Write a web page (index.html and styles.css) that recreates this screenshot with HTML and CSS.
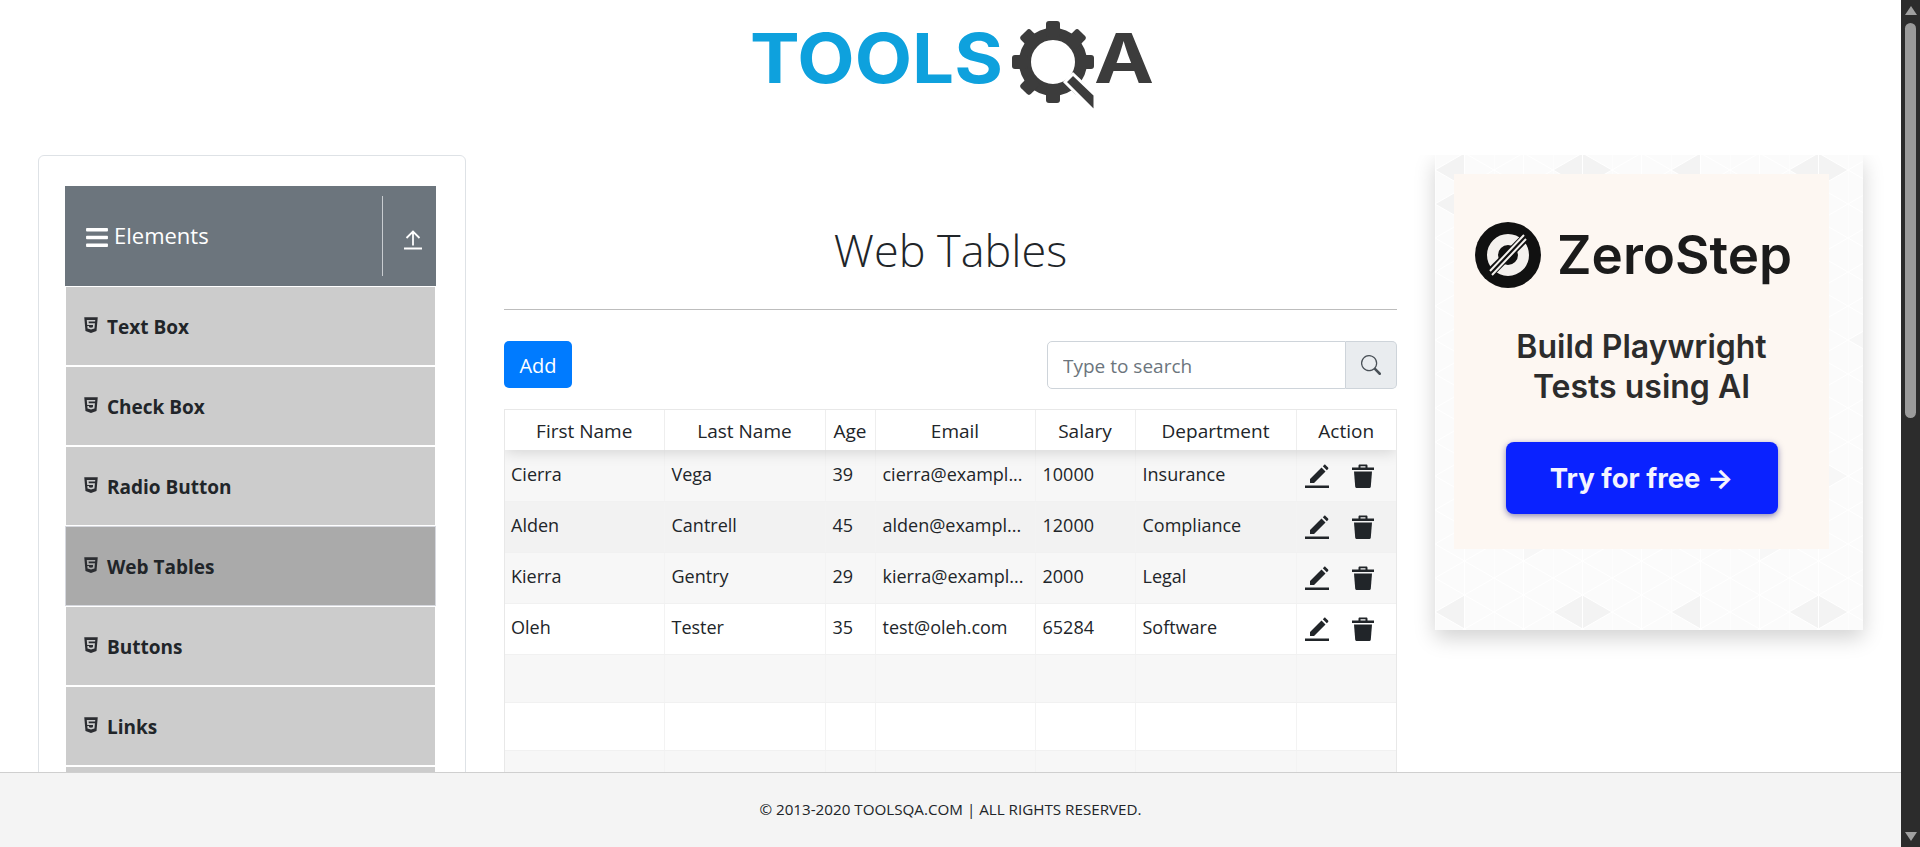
FILE: index.html
```html
<!DOCTYPE html>
<html lang="en">
<head>
    <meta charset="UTF-8">
    <meta name="viewport" content="width=device-width, initial-scale=1.0">
    <title>Web Tables</title>
    <link rel="stylesheet" href="styles.css">
</head>
<body>
    <!-- shared icons -->
    <svg class="sprite">
        <symbol id="i-html5" viewBox="0 0 384 512"><path d="M0 32l34.9 395.8L191.5 480l157.6-52.2L384 32H0zm308.2 127.9H124.4l4.1 49.4h175.6l-13.6 148.4-97.9 27v.3h-1.1l-98.7-27.3-6-75.8h47.7L138 320l53.5 14.5 53.7-14.5 6-62.2H84.3L71.5 112.2h241.1l-4.4 47.7z"/></symbol>
        <symbol id="i-edit" viewBox="0 0 24 24"><path d="M16.5 3.5 20.5 7.500 9 19H5v-4L16.5 3.500zM17.8 2.200l1.300-1.300c.4-.4 1-.4 1.400 0l2.600 2.600c.4.400.4 1 0 1.400l-1.300 1.300-4-4zM0 21.500h24V24H0z"/></symbol>
        <symbol id="i-trash" viewBox="0 0 24 24"><path fill-rule="evenodd" d="M7.500 3.500V1.700C7.500 1 8 .5 8.700 .5h6.600c.7 0 1.200.5 1.200 1.200v1.800H23V6H1V3.500h6.500zm2 0h5V2.300h-5v1.200z"/><path d="M3 7.500h18l-1.200 15c-.1 1-.9 1.500-1.900 1.500H6.100c-1 0-1.800-.5-1.900-1.500L3 7.500z"/></symbol>
    </svg>

    <div class="page">
        <header class="top">
            <svg class="logo" viewBox="0 0 420 110" aria-label="TOOLSQA">
                <text class="logo-blue" x="-2" y="83" textLength="253" lengthAdjust="spacingAndGlyphs">TOOLS</text>
                <g class="logo-gear">
                    <circle class="gear-ring" cx="301" cy="62" r="28"/>
                    <rect x="294" y="21" width="14" height="16" rx="3"/>
                    <rect x="294" y="21" width="14" height="16" rx="3" transform="rotate(45 301 62)"/>
                    <rect x="294" y="21" width="14" height="16" rx="3" transform="rotate(90 301 62)"/>
                    <rect x="294" y="21" width="14" height="16" rx="3" transform="rotate(135 301 62)"/>
                    <rect x="294" y="21" width="14" height="16" rx="3" transform="rotate(180 301 62)"/>
                    <rect x="294" y="21" width="14" height="16" rx="3" transform="rotate(225 301 62)"/>
                    <rect x="294" y="21" width="14" height="16" rx="3" transform="rotate(270 301 62)"/>
                    <rect x="294" y="21" width="14" height="16" rx="3" transform="rotate(315 301 62)"/>
                    <polygon class="gear-handle" points="321,74 343,95 343,112 313,82"/>
                </g>
                <text class="logo-dark" x="342" y="83" textLength="60" lengthAdjust="spacingAndGlyphs">A</text>
            </svg>
        </header>

        <main class="layout">
            <aside class="sidebar">
                <div class="group-head">
                    <div class="group-title">
                        <svg class="bars" viewBox="0 0 448 512"><path d="M16 132h416c8.837 0 16-7.163 16-16V76c0-8.837-7.163-16-16-16H16C7.163 60 0 67.163 0 76v40c0 8.837 7.163 16 16 16zm0 160h416c8.837 0 16-7.163 16-16v-40c0-8.837-7.163-16-16-16H16c-8.837 0-16 7.163-16 16v40c0 8.837 7.163 16 16 16zm0 160h416c8.837 0 16-7.163 16-16v-40c0-8.837-7.163-16-16-16H16c-8.837 0-16 7.163-16 16v40c0 8.837 7.163 16 16 16z"/></svg>
                        <span>Elements</span>
                    </div>
                    <div class="group-toggle">
                        <svg class="arrow" viewBox="0 0 18 20"><path d="M0 18.500h18M9 15.500V2M2.500 8 9 1.500 15.500 8"/></svg>
                    </div>
                </div>
                <ul class="menu">
                    <li class="menu-item"><svg class="html5"><use href="#i-html5"/></svg><span>Text Box</span></li>
                    <li class="menu-item"><svg class="html5"><use href="#i-html5"/></svg><span>Check Box</span></li>
                    <li class="menu-item"><svg class="html5"><use href="#i-html5"/></svg><span>Radio Button</span></li>
                    <li class="menu-item active"><svg class="html5"><use href="#i-html5"/></svg><span>Web Tables</span></li>
                    <li class="menu-item"><svg class="html5"><use href="#i-html5"/></svg><span>Buttons</span></li>
                    <li class="menu-item"><svg class="html5"><use href="#i-html5"/></svg><span>Links</span></li>
                    <li class="menu-item"></li>
                </ul>
            </aside>

            <section class="content">
                <h1 class="title">Web Tables</h1>
                <div class="toolbar">
                    <button class="add-btn" type="button">Add</button>
                    <div class="search">
                        <input class="search-input" type="text" placeholder="Type to search">
                        <span class="search-addon">
                            <svg class="search-icon" viewBox="0 0 16 16"><path d="M11.742 10.344a6.5 6.5 0 1 0-1.397 1.398h-.001c.03.04.062.078.098.115l3.85 3.85a1 1 0 0 0 1.415-1.414l-3.85-3.85a1.007 1.007 0 0 0-.115-.1zM12 6.5a5.5 5.5 0 1 1-11 0 5.5 5.5 0 0 1 11 0z"/></svg>
                        </span>
                    </div>
                </div>
                <div class="grid-wrap">
                    <table class="grid">
                        <colgroup>
                            <col class="c-first"><col class="c-last"><col class="c-age"><col class="c-email"><col class="c-salary"><col class="c-dept"><col class="c-action">
                        </colgroup>
                        <thead>
                            <tr><th>First Name</th><th>Last Name</th><th>Age</th><th>Email</th><th>Salary</th><th>Department</th><th>Action</th></tr>
                        </thead>
                        <tbody>
                            <tr class="odd">
                                <td>Cierra</td><td>Vega</td><td>39</td><td>cierra@exampl...</td><td>10000</td><td>Insurance</td>
                                <td><div class="actions"><svg class="act"><use href="#i-edit"/></svg><svg class="act"><use href="#i-trash"/></svg></div></td>
                            </tr>
                            <tr class="hover">
                                <td>Alden</td><td>Cantrell</td><td>45</td><td>alden@exampl...</td><td>12000</td><td>Compliance</td>
                                <td><div class="actions"><svg class="act"><use href="#i-edit"/></svg><svg class="act"><use href="#i-trash"/></svg></div></td>
                            </tr>
                            <tr class="odd">
                                <td>Kierra</td><td>Gentry</td><td>29</td><td>kierra@exampl...</td><td>2000</td><td>Legal</td>
                                <td><div class="actions"><svg class="act"><use href="#i-edit"/></svg><svg class="act"><use href="#i-trash"/></svg></div></td>
                            </tr>
                            <tr>
                                <td>Oleh</td><td>Tester</td><td>35</td><td>test@oleh.com</td><td>65284</td><td>Software</td>
                                <td><div class="actions"><svg class="act"><use href="#i-edit"/></svg><svg class="act"><use href="#i-trash"/></svg></div></td>
                            </tr>
                            <tr class="odd empty"><td></td><td></td><td></td><td></td><td></td><td></td><td></td></tr>
                            <tr class="empty"><td></td><td></td><td></td><td></td><td></td><td></td><td></td></tr>
                            <tr class="odd empty"><td></td><td></td><td></td><td></td><td></td><td></td><td></td></tr>
                        </tbody>
                    </table>
                </div>
            </section>

            <aside class="ad">
                <div class="ad-card">
                    <div class="ad-brand">
                        <svg class="ad-mark" viewBox="0 0 66 66">
                            <circle cx="33" cy="33" r="33" fill="#111"/>
                            <circle cx="33" cy="33" r="15.500" fill="none" stroke="#f4f1ee" stroke-width="11"/>
                            <path d="M13 53 53 13" stroke="#111" stroke-width="9"/>
                            <path d="M15 49 49 13M17 53 51 17" stroke="#f4f1ee" stroke-width="2"/>
                        </svg>
                        <span class="ad-name">ZeroStep</span>
                    </div>
                    <p class="ad-text">Build Playwright<br>Tests using AI</p>
                    <div class="ad-btn">Try for free →</div>
                </div>
            </aside>
        </main>

        <footer class="foot">© 2013-2020 TOOLSQA.COM | ALL RIGHTS RESERVED.</footer>
    </div>

    <div class="scrollbar">
        <span class="sb-up"></span>
        <div class="sb-track"><div class="sb-thumb"></div></div>
        <span class="sb-down"></span>
    </div>
</body>
</html>
```

FILE: styles.css
```css
* {
    box-sizing: border-box;
}
body {
    margin: 0;
    height: 100vh;
    overflow: hidden;
    display: flex;
    font-family: 'Open Sans', 'Noto Sans', sans-serif;
    color: #212529;
    background: #fff;
}
.sprite {
    display: none;
}
.page {
    flex: 1;
    min-width: 0;
    display: flex;
    flex-direction: column;
}

/* header */
.top {
    height: 155px;
    flex: none;
    padding-left: 752px;
}
.logo {
    display: block;
    width: 420px;
    height: 110px;
    overflow: visible;
}
.logo-blue, .logo-dark {
    font-family: Inter, sans-serif;
    font-weight: 700;
    font-size: 69px;
}
.logo-blue {
    fill: #0ea1dd;
}
.logo-dark {
    fill: #3c3c3c;
}
.logo-gear {
    fill: #3c3c3c;
}
.gear-ring {
    fill: none;
    stroke: #3c3c3c;
    stroke-width: 12;
}
.gear-handle {
    stroke: #fff;
    stroke-width: 3;
}

/* layout */
.layout {
    flex: 1;
    min-height: 0;
    overflow: hidden;
    display: grid;
    grid-template-columns: 428px 893px 428px;
    column-gap: 38px;
    padding-left: 38px;
    align-items: start;
}

/* sidebar */
.sidebar {
    height: 800px;
    padding: 30px 29px 30px 26px;
    border: 1px solid #dee2e6;
    border-radius: 6px;
}
.group-head {
    height: 100px;
    display: flex;
    align-items: center;
    background: #6c757d;
    color: #fff;
    font-size: 22px;
}
.group-title {
    flex: 1;
    display: flex;
    align-items: center;
    gap: 6px;
    padding-left: 21px;
    padding-bottom: 2px;
}
.bars {
    width: 22px;
    height: 25px;
    fill: #fff;
    margin-top: 5px;
}
.group-toggle {
    width: 54px;
    height: 80px;
    display: flex;
    align-items: center;
    justify-content: center;
    padding-left: 7px;
    border-left: 1px solid #c8ccd0;
}
.arrow {
    width: 18px;
    height: 20px;
    margin-top: 8px;
    fill: none;
    stroke: #fff;
    stroke-width: 1.8;
}
.menu {
    list-style: none;
    margin: 0;
    padding: 1px 1px 0;
}
.menu-item {
    height: 78px;
    margin-bottom: 2px;
    display: flex;
    align-items: center;
    gap: 9px;
    padding: 2px 0 0 18px;
    background: #ccc;
    font-size: 19px;
    font-weight: 700;
}
.menu-item.active {
    background: #aaa;
    outline: 1px solid #d6d8de;
}
.html5 {
    width: 14px;
    height: 18px;
    fill: #2b2d31;
    margin-bottom: 5px;
}

/* content */
.title {
    margin: 0;
    padding-top: 62px;
    height: 155px;
    border-bottom: 1px solid #bdbdbd;
    text-align: center;
    font-size: 45px;
    font-weight: 300;
    line-height: 66px;
}
.toolbar {
    display: flex;
    justify-content: space-between;
    margin-top: 31px;
}
.add-btn {
    width: 68px;
    height: 47px;
    padding: 2px 0 0;
    border: none;
    border-radius: 5px;
    background: #007bff;
    color: #fff;
    font: 400 20px 'Open Sans', sans-serif;
}
.search {
    width: 350px;
    height: 48px;
    display: flex;
}
.search-input {
    flex: 1;
    min-width: 0;
    padding: 2px 15px 0;
    border: 1px solid #ced4da;
    border-radius: 5px 0 0 5px;
    font: 400 19px 'Open Sans', sans-serif;
    color: #495057;
}
.search-input::placeholder {
    color: #6c757d;
    opacity: 1;
}
.search-addon {
    width: 51px;
    display: flex;
    align-items: center;
    justify-content: center;
    background: #e9ecef;
    border: 1px solid #ced4da;
    border-left: none;
    border-radius: 0 5px 5px 0;
}
.search-icon {
    width: 20px;
    height: 20px;
    fill: #495057;
}

/* table */
.grid-wrap {
    margin-top: 20px;
    border: 1px solid #e8e8e8;
    border-bottom: none;
    overflow: hidden;
}
.grid {
    width: 891px;
    table-layout: fixed;
    border-collapse: collapse;
    font-size: 18px;
}
.c-first { width: 159px; }
.c-last { width: 161px; }
.c-age { width: 50px; }
.c-email { width: 160px; }
.c-salary { width: 100px; }
.c-dept { width: 161px; }
.c-action { width: 100px; }
thead tr {
    height: 40px;
    box-shadow: 0 2px 15px rgba(0, 0, 0, 0.15);
    position: relative;
}
th {
    padding: 2px 3px 0;
    font-size: 19px;
    font-weight: 400;
    text-align: center;
    border-right: 1px solid #eee;
    white-space: nowrap;
}
th:last-child, td:last-child {
    border-right: none;
}
tbody tr {
    height: 51px;
}
tbody tr.empty {
    height: 48px;
}
td {
    padding: 0 0 3px 7px;
    border-right: 1px solid #f3f3f3;
    border-bottom: 1px solid #f1f1f1;
    white-space: nowrap;
}
td:first-child {
    padding-left: 6px;
}
tr.odd {
    background: #f7f7f7;
}
tr.hover {
    background: #f2f2f2;
}
.actions {
    display: flex;
    gap: 22px;
    padding-left: 1px;
    padding-top: 4px;
}
.act {
    width: 24px;
    height: 24px;
    fill: #212529;
}

/* ad */
.ad {
    width: 428px;
    height: 475px;
    padding: 19px 34px 81px 19px;
    box-shadow: 0 8px 20px rgba(0, 0, 0, 0.18);
    background-color: #fbfbfb;
    background-position: 0 -2px;
    background-image: url("data:image/svg+xml,%3Csvg xmlns='http://www.w3.org/2000/svg' width='236' height='442'%3E%3Cdefs%3E%3Cpattern id='g' width='59' height='34' patternUnits='userSpaceOnUse'%3E%3Cpath d='M29.5 0V34M0 17 29.5 0M0 17 29.5 34M29.5 0 59 17M29.5 34 59 17M0 0V34' stroke='%23fff' fill='none'/%3E%3C/pattern%3E%3C/defs%3E%3Cpath d='M0 17 29.5 0V34zM118 17 147.500 0V34zM147.500 0 177 17 147.500 34zM0 51 29.5 34V68z' fill='%23f3f3f3'/%3E%3Cpath d='M59 119 88.500 102V136zM177 187 206.500 170V204zM29.5 238 59 255 29.5 272zM147.500 306 177 323 147.500 340zM88.500 374 118 391 88.500 408z' fill='%23f7f7f7'/%3E%3Crect width='236' height='442' fill='url(%23g)'/%3E%3C/svg%3E");
    font-family: Inter, sans-serif;
}
.ad-card {
    height: 375px;
    background: #fdf7f2;
    display: flex;
    flex-direction: column;
    align-items: center;
}
.ad-brand {
    width: 100%;
    display: flex;
    align-items: center;
    gap: 16px;
    padding: 48px 0 0 21px;
    color: #1b1b1b;
}
.ad-mark {
    width: 66px;
    height: 66px;
    flex: none;
}
.ad-name {
    font-size: 53px;
    font-weight: 600;
    line-height: 66px;
}
.ad-text {
    margin: 39px 0 0;
    text-align: center;
    font-size: 32px;
    font-weight: 600;
    line-height: 40px;
    color: #2c2c2c;
}
.ad-btn {
    width: 272px;
    height: 72px;
    margin-top: 35px;
    display: flex;
    align-items: center;
    justify-content: center;
    border-radius: 8px;
    background: #0a22ff;
    box-shadow: 0 2px 6px rgba(20, 20, 120, 0.5);
    color: #f4f4ff;
    font-size: 27.5px;
    font-weight: 700;
}

/* footer */
.foot {
    height: 75px;
    flex: none;
    display: flex;
    align-items: center;
    justify-content: center;
    background: #f4f4f4;
    border-top: 1px solid #cfcfcf;
    font-size: 15.2px;
    padding-bottom: 2px;
}

/* scrollbar */
.scrollbar {
    width: 19px;
    flex: none;
    display: flex;
    flex-direction: column;
    align-items: center;
    background: #2c2c2c;
}
.sb-up, .sb-down {
    width: 0;
    height: 0;
    flex: none;
    border-left: 6px solid transparent;
    border-right: 6px solid transparent;
}
.sb-up {
    margin-top: 6px;
    border-bottom: 9px solid #a0a0a0;
}
.sb-down {
    margin-bottom: 6px;
    border-top: 9px solid #a0a0a0;
}
.sb-track {
    flex: 1;
    width: 100%;
    padding: 8px 4px 0;
}
.sb-thumb {
    height: 395px;
    border-radius: 6px;
    background: #9b9b9b;
}
```
